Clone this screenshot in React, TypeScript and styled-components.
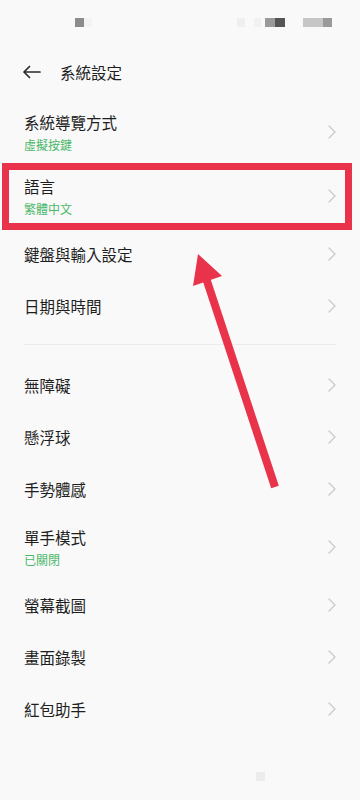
import React from "react";
import styled, { createGlobalStyle } from "styled-components";

const GlobalStyle = createGlobalStyle`
  html, body {
    margin: 0;
    padding: 0;
    background: #f9f9f9;
  }
  * {
    box-sizing: border-box;
  }
`;

const Page = styled.div`
  position: relative;
  width: 360px;
  min-height: 800px;
  background: #f9f9f9;
  font-family: "Noto Sans CJK TC", "Noto Sans", sans-serif;
  color: #1e1e1e;
  overflow: hidden;
`;

const StatusBar = styled.div`
  height: 44px;
  display: flex;
  align-items: center;
  justify-content: space-between;
  padding: 0 28px 0 75px;
`;

const PixelGroup = styled.div`
  display: flex;
  align-items: center;
`;

const Pixel = styled.span<{ $color: string; $w?: number; $ml?: number }>`
  display: block;
  width: ${({ $w }) => $w ?? 9}px;
  height: 9px;
  margin-left: ${({ $ml }) => $ml ?? 0}px;
  background: ${({ $color }) => $color};
`;

const Header = styled.div`
  height: 56px;
  display: flex;
  align-items: center;
  gap: 19px;
  padding-left: 22px;
`;

const BackButton = styled.div`
  width: 19px;
  height: 14px;
  display: flex;
  align-items: center;
`;

const Title = styled.div`
  font-size: 15.5px;
  line-height: 22px;
  color: #1e1e1e;
`;

const List = styled.div`
  display: flex;
  flex-direction: column;
`;

const Row = styled.div<{ $tall?: boolean }>`
  height: ${({ $tall }) => ($tall ? 64 : 52)}px;
  display: flex;
  align-items: center;
  justify-content: space-between;
  padding: 0 23px 0 24px;
`;

const RowText = styled.div`
  display: flex;
  flex-direction: column;
  gap: 5px;
`;

const RowTitle = styled.div`
  font-size: 15.5px;
  line-height: 20px;
  color: #1e1e1e;
`;

const RowSub = styled.div`
  font-size: 12px;
  line-height: 16px;
  color: #4cb86a;
`;

const Divider = styled.div`
  height: 1px;
  margin: 12px 24px 14px 24px;
  background: #ececec;
`;

const HomeDot = styled.div`
  margin: 37px 0 0 256px;
  width: 9px;
  height: 9px;
  background: #ececec;
`;

const Highlight = styled.div`
  position: absolute;
  left: 2px;
  top: 163px;
  width: 350px;
  height: 67px;
  border: 7px solid #e8334a;
  pointer-events: none;
`;

const ArrowLayer = styled.svg`
  position: absolute;
  left: 0;
  top: 0;
  pointer-events: none;
`;

function Chevron() {
  return (
    <svg width="10" height="16" viewBox="0 0 10 16">
      <path
        d="M2 2 L8 8 L2 14"
        fill="none"
        stroke="#cbcbcb"
        strokeWidth="1.4"
        strokeLinecap="round"
        strokeLinejoin="round"
      />
    </svg>
  );
}

type Item = { title: string; sub?: string };

const groupOne: Item[] = [
  { title: "系統導覽方式", sub: "虛擬按鍵" },
  { title: "語言", sub: "繁體中文" },
  { title: "鍵盤與輸入設定" },
  { title: "日期與時間" },
];

const groupTwo: Item[] = [
  { title: "無障礙" },
  { title: "懸浮球" },
  { title: "手勢體感" },
  { title: "單手模式", sub: "已關閉" },
  { title: "螢幕截圖" },
  { title: "畫面錄製" },
  { title: "紅包助手" },
];

function SettingRow({ item }: { item: Item }) {
  return (
    <Row $tall={!!item.sub}>
      <RowText>
        <RowTitle>{item.title}</RowTitle>
        {item.sub && <RowSub>{item.sub}</RowSub>}
      </RowText>
      <Chevron />
    </Row>
  );
}

export default function App() {
  return (
    <>
      <GlobalStyle />
      <Page>
        <StatusBar>
          <PixelGroup>
            <Pixel $color="#8c8c8c" />
            <Pixel $color="#f3f3f3" $w={8} />
          </PixelGroup>
          <PixelGroup>
            <Pixel $color="#efefef" $w={8} />
            <Pixel $color="#f1f1f1" $w={7} $ml={9} />
            <Pixel $color="#9a9a9a" $w={10} $ml={4} />
            <Pixel $color="#555555" $w={10} />
            <Pixel $color="#c6c6c6" $w={20} $ml={18} />
            <Pixel $color="#9a9a9a" $w={9} />
          </PixelGroup>
        </StatusBar>
        <Header>
          <BackButton>
            <svg width="19" height="14" viewBox="0 0 19 14">
              <path
                d="M18 7 H2 M7.5 1.5 L2 7 L7.5 12.5"
                fill="none"
                stroke="#2a2a2a"
                strokeWidth="1.7"
                strokeLinecap="round"
                strokeLinejoin="round"
              />
            </svg>
          </BackButton>
          <Title>系統設定</Title>
        </Header>
        <List>
          {groupOne.map((item) => (
            <SettingRow key={item.title} item={item} />
          ))}
        </List>
        <Divider />
        <List>
          {groupTwo.map((item) => (
            <SettingRow key={item.title} item={item} />
          ))}
        </List>
        <HomeDot />

        <Highlight />
        <ArrowLayer width="360" height="800" viewBox="0 0 360 800">
          <line
            x1="275"
            y1="487"
            x2="206"
            y2="278"
            stroke="#e8334a"
            strokeWidth="8"
          />
          <polygon points="198,254 193,286 222,276" fill="#e8334a" />
        </ArrowLayer>
      </Page>
    </>
  );
}
